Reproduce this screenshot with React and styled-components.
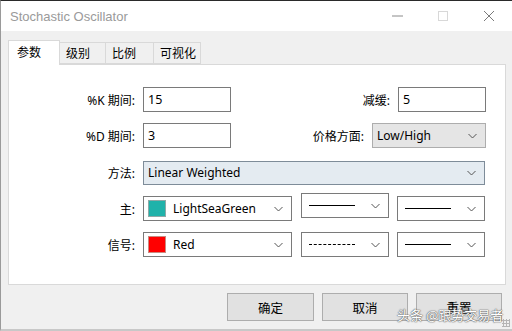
import React from "react"
import styled, { createGlobalStyle } from "styled-components"

const GlobalStyle = createGlobalStyle`
  html, body {
    margin: 0;
    padding: 0;
    background: #f0f0f0;
  }
  * { box-sizing: border-box; }
`

const UI_FONT = `"Noto Sans", "Noto Sans CJK SC", sans-serif`

const Window = styled.div`
  width: 512px;
  height: 331px;
  display: flex;
  flex-direction: column;
  background: #f0f0f0;
  border-top: 1px solid #2a2a2a;
  border-left: 1px solid #9a9a9a;
  border-bottom: 2px solid #c8c8c8;
  font-family: ${UI_FONT};
  font-size: 12px;
  color: #000;
  overflow: hidden;
  position: relative;
`

const TitleBar = styled.div`
  height: 30px;
  background: #fff;
  display: flex;
  align-items: center;
  padding-left: 9px;
`

const Title = styled.div`
  flex: 1;
  font-family: "Liberation Sans", sans-serif;
  font-size: 13px;
  color: #9a9a9a;
`

const Controls = styled.div`
  display: flex;
  height: 100%;
`

const CtrlButton = styled.div`
  width: 46px;
  height: 100%;
  display: flex;
  align-items: center;
  justify-content: center;
`

const Body = styled.div`
  flex: 1;
  display: flex;
  flex-direction: column;
  padding: 9px 6px 0 7px;
`

const Tabs = styled.div`
  display: flex;
  align-items: flex-end;
  height: 24px;
  position: relative;
  z-index: 1;
`

const Tab = styled.div`
  width: ${(p) => p.$w}px;
  height: ${(p) => (p.$active ? 25 : 22)}px;
  margin-bottom: ${(p) => (p.$active ? -1 : 0)}px;
  background: ${(p) => (p.$active ? "#fff" : "#f0f0f0")};
  border: 1px solid #d9d9d9;
  border-bottom: ${(p) => (p.$active ? "none" : "1px solid #d9d9d9")};
  border-left: ${(p) => (p.$first || p.$active ? "1px solid #d9d9d9" : "none")};
  display: flex;
  align-items: center;
  padding-left: ${(p) => (p.$active ? 8 : 6)}px;
  padding-bottom: ${(p) => (p.$active ? 3 : 0)}px;
  font-size: 12px;
`

const Panel = styled.div`
  height: 221px;
  background: #fff;
  border: 1px solid #d9d9d9;
  padding: 22px 19px 0 0;
  display: flex;
  flex-direction: column;
`

const Row = styled.div`
  display: flex;
  align-items: center;
  height: 25px;
  margin-bottom: ${(p) => p.$gap ?? 11}px;
`

const Label = styled.div`
  width: ${(p) => p.$w ?? 126}px;
  margin-left: ${(p) => (p.$push ? "auto" : "0")};
  text-align: right;
  margin-right: 8px;
  white-space: nowrap;
`

const Input = styled.div`
  width: ${(p) => p.$w ?? 88}px;
  height: 25px;
  border: 1px solid #7a7a7a;
  background: #fff;
  display: flex;
  align-items: center;
  padding-left: 4px;
  font-size: 12.5px;
`

const Select = styled.div`
  width: ${(p) => p.$w}px;
  height: ${(p) => p.$h ?? 25}px;
  margin-left: ${(p) => p.$ml ?? 0}px;
  margin-top: ${(p) => p.$mt ?? 0}px;
  border: 1px solid ${(p) => (p.$tone === "blue" ? "#7e8c99" : p.$tone === "gray" ? "#adadad" : "#7a7a7a")};
  background: ${(p) => (p.$tone === "blue" ? "#e4ebf1" : p.$tone === "gray" ? "#e5e5e5" : "#fff")};
  display: flex;
  align-items: center;
  padding: 0 8px 0 4px;
  font-size: 12px;
  gap: 6px;
`

const SelectText = styled.span`
  flex: 1;
  white-space: nowrap;
`

const Swatch = styled.span`
  width: 18px;
  height: 17px;
  background: ${(p) => p.$color};
  border: 1px solid ${(p) => p.$edge};
  flex: none;
  margin-right: 1px;
`

const LineSample = styled.span`
  flex: 1;
  margin: 0 10px 0 3px;
  border-top: 1px ${(p) => (p.$dashed ? "dashed" : "solid")} #000;
  height: 0;
`

const Buttons = styled.div`
  display: flex;
  justify-content: flex-end;
  gap: 8px;
  padding: 8px 4px 0 0;
`

const Button = styled.div`
  width: ${(p) => p.$w ?? 86}px;
  height: 28px;
  background: #e1e1e1;
  border: 1px solid #adadad;
  display: flex;
  align-items: center;
  justify-content: center;
  font-size: 12.5px;
`

const Watermark = styled.div`
  position: absolute;
  left: 396px;
  top: 304px;
  font-family: "Noto Sans CJK SC", sans-serif;
  font-size: 13px;
  color: #fff;
  text-shadow: 0 0 1px #555, 0 0 1px #555, 0 0 2px #999;
  white-space: nowrap;
`

const Grip = styled.div`
  position: absolute;
  right: 2px;
  bottom: 2px;
  width: 8px;
  height: 8px;
  background-image: radial-gradient(#b5b5b5 1px, transparent 1.2px);
  background-size: 3px 3px;
`

const Chevron = () => (
  <svg width="9" height="6" viewBox="0 0 9 6">
    <polyline points="0.5,1 4.5,5 8.5,1" fill="none" stroke="#555" strokeWidth="1" />
  </svg>
)

export default function App() {
  return (
    <>
      <GlobalStyle />
      <Window>
        <TitleBar>
          <Title>Stochastic Oscillator</Title>
          <Controls>
            <CtrlButton>
              <svg width="11" height="2"><line x1="0" y1="1" x2="11" y2="1" stroke="#8a8a8a" /></svg>
            </CtrlButton>
            <CtrlButton>
              <svg width="11" height="11"><rect x="0.5" y="0.5" width="9" height="9" fill="none" stroke="#d8d8d8" /></svg>
            </CtrlButton>
            <CtrlButton>
              <svg width="12" height="12">
                <path d="M1 1 L11 11 M11 1 L1 11" stroke="#7a7a7a" strokeWidth="1" />
              </svg>
            </CtrlButton>
          </Controls>
        </TitleBar>
        <Body>
          <Tabs>
            <Tab $active $first $w={52}>参数</Tab>
            <Tab $w={46}>级别</Tab>
            <Tab $w={48}>比例</Tab>
            <Tab $w={47}>可视化</Tab>
          </Tabs>
          <Panel>
            <Row>
              <Label>%K 期间:</Label>
              <Input>15</Input>
              <Label $push $w={60}>减缓:</Label>
              <Input>5</Input>
            </Row>
            <Row $gap={12}>
              <Label>%D 期间:</Label>
              <Input>3</Input>
              <Label $push $w={80}>价格方面:</Label>
              <Select $w={114} $tone="gray">
                <SelectText>Low/High</SelectText>
                <Chevron />
              </Select>
            </Row>
            <Row $gap={11}>
              <Label>方法:</Label>
              <Select $w={342} $h={24} $tone="blue">
                <SelectText>Linear Weighted</SelectText>
                <Chevron />
              </Select>
            </Row>
            <Row>
              <Label>主:</Label>
              <Select $w={149}>
                <Swatch $color="#20b2aa" $edge="#8fa9a7" />
                <SelectText>LightSeaGreen</SelectText>
                <Chevron />
              </Select>
              <Select $w={88} $ml={9} $mt={-6}>
                <LineSample />
                <Chevron />
              </Select>
              <Select $w={88} $ml={8}>
                <LineSample />
                <Chevron />
              </Select>
            </Row>
            <Row>
              <Label>信号:</Label>
              <Select $w={149}>
                <Swatch $color="#ff0000" $edge="#c98a80" />
                <SelectText>Red</SelectText>
                <Chevron />
              </Select>
              <Select $w={88} $ml={9}>
                <LineSample $dashed />
                <Chevron />
              </Select>
              <Select $w={88} $ml={8}>
                <LineSample />
                <Chevron />
              </Select>
            </Row>
          </Panel>
          <Buttons>
            <Button $w={87}>确定</Button>
            <Button>取消</Button>
            <Button>重置</Button>
          </Buttons>
        </Body>
        <Watermark>头条 @跟势交易者</Watermark>
        <Grip />
      </Window>
    </>
  )
}
